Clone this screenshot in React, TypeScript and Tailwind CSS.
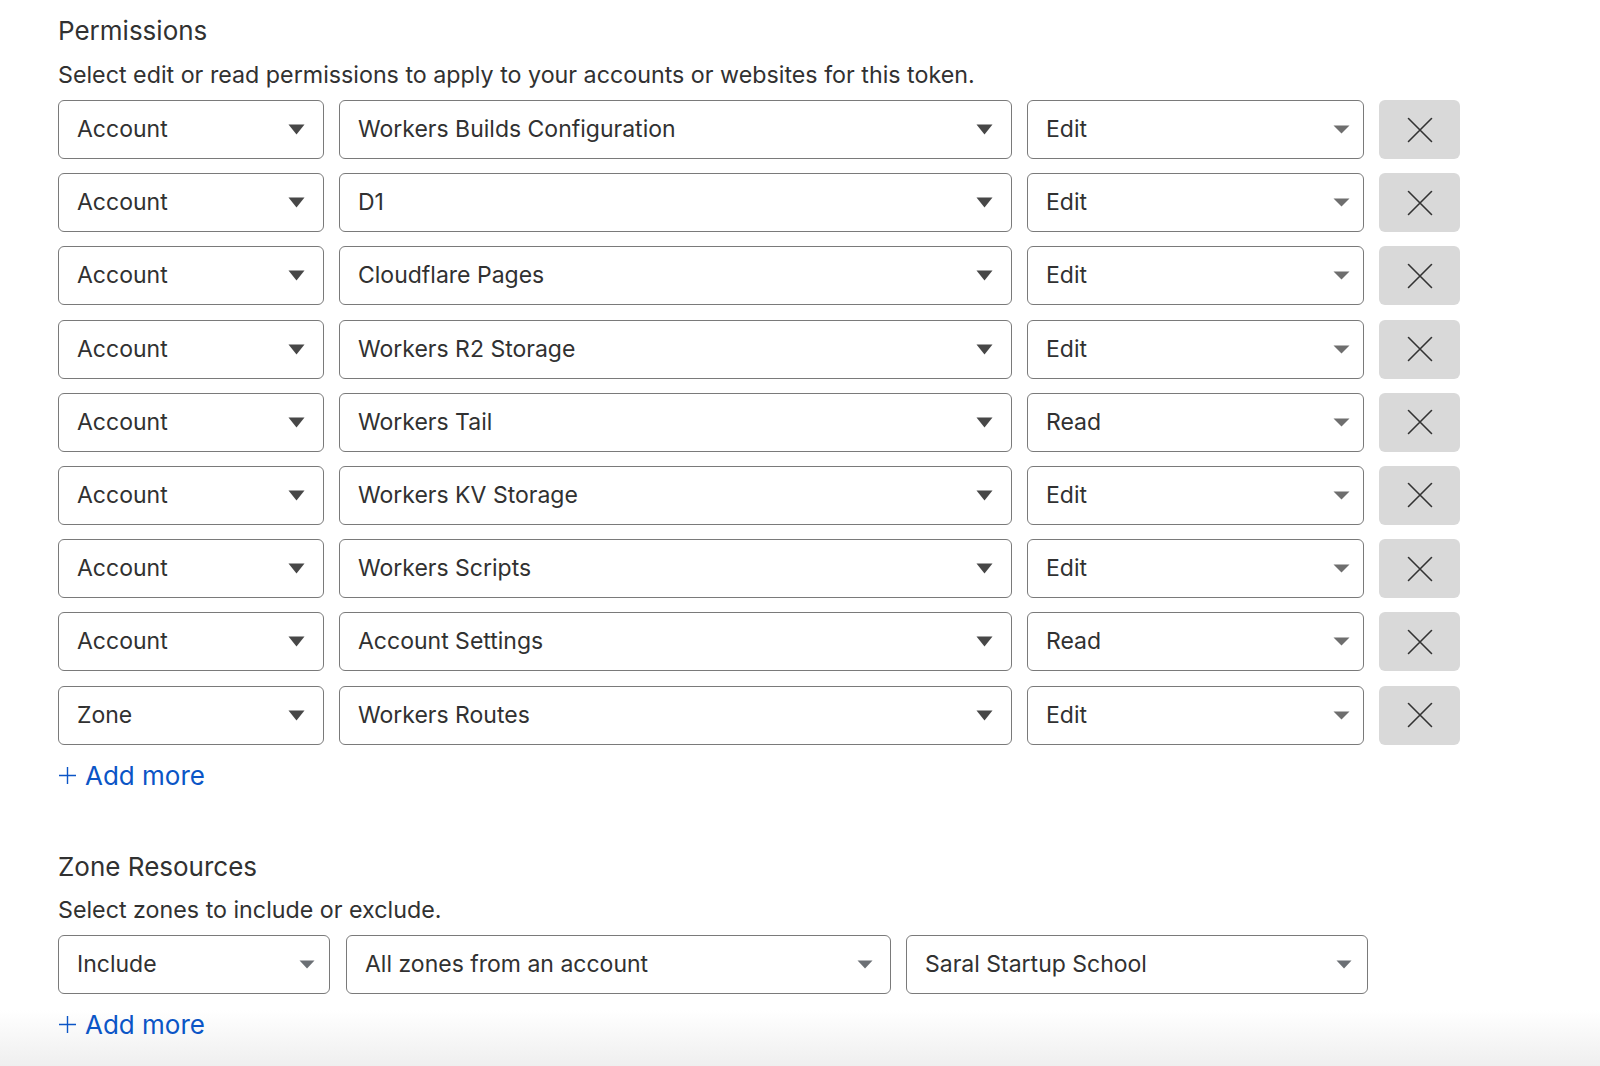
import React from "react";

type Variant = "dark" | "light" | "zone";

function Caret({ variant }: { variant: Variant }) {
  if (variant === "dark") {
    return (
      <svg width="17" height="11" viewBox="0 0 17 11" className="shrink-0">
        <path d="M0.5 0.5 L16.5 0.5 L8.5 10.5 Z" fill="#474747" />
      </svg>
    );
  }
  if (variant === "light") {
    return (
      <svg width="17" height="9" viewBox="0 0 17 9" className="shrink-0">
        <path d="M0.5 0.5 L16.5 0.5 L8.5 8.5 Z" fill="#6e6e6e" />
      </svg>
    );
  }
  return (
    <svg width="16" height="9" viewBox="0 0 16 9" className="shrink-0">
      <path d="M0.5 0.5 L15.5 0.5 L8 8.5 Z" fill="#6b6f74" />
    </svg>
  );
}

function Select({
  label,
  width,
  variant,
  pr,
}: {
  label: string;
  width: string;
  variant: Variant;
  pr: string;
}) {
  return (
    <div
      className={`${width} ${pr} h-[59px] shrink-0 flex items-center justify-between pl-[18px] rounded-[6px] border-[1.5px] border-[#7a7a7a] bg-white`}
    >
      <span className="text-[23px] text-[#313131] leading-none">{label}</span>
      <Caret variant={variant} />
    </div>
  );
}

function RemoveButton() {
  return (
    <div className="w-[81px] h-[59px] shrink-0 rounded-[6px] bg-[#d9d9d9] flex items-center justify-center">
      <svg width="26" height="26" viewBox="0 0 26 26">
        <path d="M1.5 1.5 L24.5 24.5 M24.5 1.5 L1.5 24.5" stroke="#333333" strokeWidth="1.6" strokeLinecap="round" />
      </svg>
    </div>
  );
}

function AddMore() {
  return (
    <div className="flex items-center text-[#0b55c6] leading-none">
      <svg width="19" height="19" viewBox="0 0 19 19" className="mr-[8px] -mt-[1px]">
        <path d="M9.5 1 L9.5 18 M1 9.5 L18 9.5" stroke="#0b55c6" strokeWidth="1.4" />
      </svg>
      <span className="text-[26px]">Add more</span>
    </div>
  );
}

const rows: [string, string, string][] = [
  ["Account", "Workers Builds Configuration", "Edit"],
  ["Account", "D1", "Edit"],
  ["Account", "Cloudflare Pages", "Edit"],
  ["Account", "Workers R2 Storage", "Edit"],
  ["Account", "Workers Tail", "Read"],
  ["Account", "Workers KV Storage", "Edit"],
  ["Account", "Workers Scripts", "Edit"],
  ["Account", "Account Settings", "Read"],
  ["Zone", "Workers Routes", "Edit"],
];

export default function App() {
  return (
    <div
      className="relative w-[1600px] h-[1066px] overflow-hidden bg-white text-[#313131]"
      style={{ fontFamily: "Inter, 'Noto Sans', Arial, sans-serif" }}
    >
      <div className="absolute left-0 right-0 bottom-0 h-[56px] bg-gradient-to-b from-[rgba(240,240,240,0)] to-[#efefef]" />
      <div className="relative pl-[58px]">
        <div className="h-[59px] flex items-center text-[26px] leading-none pt-[2px]">Permissions</div>
        <div className="h-[30px] flex items-center text-[23.25px] leading-none mt-[1px]">
          Select edit or read permissions to apply to your accounts or websites for this token.
        </div>
        <div className="mt-[10px] flex flex-col gap-[14.2px]">
          {rows.map((r, i) => (
            <div key={i} className="flex gap-[15px]">
              <Select label={r[0]} width="w-[266px]" variant="dark" pr="pr-[18px]" />
              <Select label={r[1]} width="w-[673px]" variant="dark" pr="pr-[18px]" />
              <Select label={r[2]} width="w-[337px]" variant="light" pr="pr-[13px]" />
              <RemoveButton />
            </div>
          ))}
        </div>
        <div className="h-[62px] flex items-center">
          <AddMore />
        </div>
        <div className="h-[39px]" />
        <div className="h-[42px] flex items-center text-[26px] leading-none">Zone Resources</div>
        <div className="h-[45px] flex items-center text-[23.25px] leading-none">Select zones to include or exclude.</div>
        <div className="mt-[2px] flex">
          <Select label="Include" width="w-[272px]" variant="zone" pr="pr-[14px]" />
          <div className="w-[16px]" />
          <Select label="All zones from an account" width="w-[545px]" variant="zone" pr="pr-[17px]" />
          <div className="w-[15px]" />
          <Select label="Saral Startup School" width="w-[462px]" variant="zone" pr="pr-[15px]" />
        </div>
        <div className="h-[62px] flex items-center">
          <AddMore />
        </div>
      </div>
    </div>
  );
}
